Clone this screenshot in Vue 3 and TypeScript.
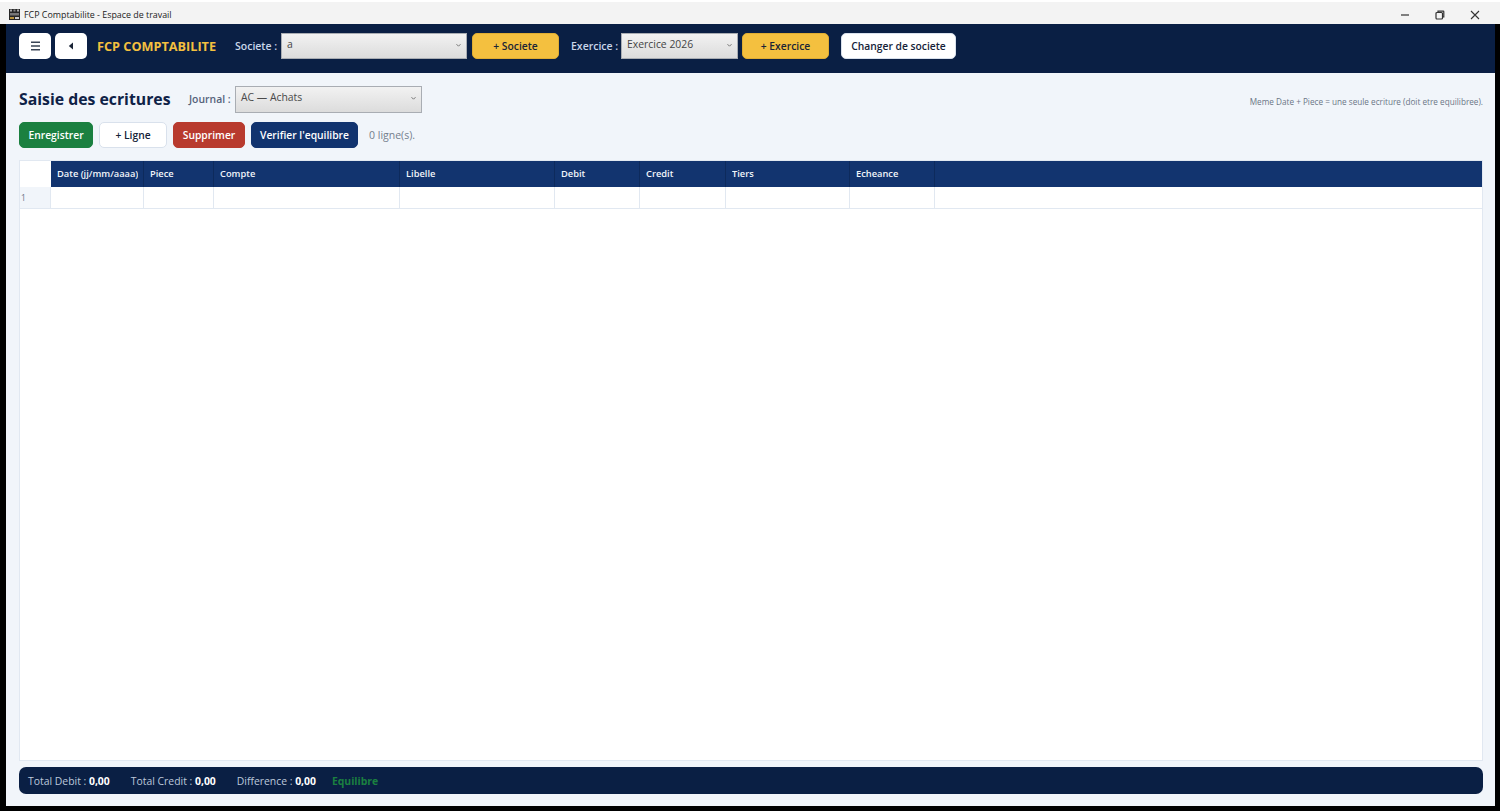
<script setup lang="ts">
const columns: { label: string; width: number }[] = [
  { label: 'Date (jj/mm/aaaa)', width: 93 },
  { label: 'Piece', width: 70 },
  { label: 'Compte', width: 186 },
  { label: 'Libelle', width: 155 },
  { label: 'Debit', width: 85 },
  { label: 'Credit', width: 86 },
  { label: 'Tiers', width: 124 },
  { label: 'Echeance', width: 85 },
]
</script>

<template>
  <div class="window">
    <header class="titlebar">
      <div class="title">
        <svg class="app-icon" width="11" height="11" viewBox="0 0 11 11">
          <rect width="11" height="11" fill="#262626" />
          <rect x="1" y="0.5" width="2" height="2" fill="#aaa" />
          <rect x="4.5" y="0.5" width="2" height="2" fill="#888" />
          <rect x="8" y="0.5" width="2" height="2" fill="#aaa" />
          <rect x="1" y="4" width="9" height="2.5" fill="#777" />
          <rect x="1" y="8" width="4" height="2" fill="#b8923a" />
          <rect x="6" y="8" width="4" height="2" fill="#ccc" />
        </svg>
        <span>FCP Comptabilite - Espace de travail</span>
      </div>
      <div class="win-controls">
        <svg width="10" height="10" viewBox="0 0 10 10"><path d="M1 5h8" stroke="#333" stroke-width="1.2" /></svg>
        <svg width="10" height="10" viewBox="0 0 10 10" fill="none" stroke="#333" stroke-width="1.2"><rect x="1" y="2.5" width="6.5" height="6.5" rx="1" /><path d="M3 2.2V1.2h5.3a.5.5 0 0 1 .5.5V7h-1" /></svg>
        <svg width="10" height="10" viewBox="0 0 10 10"><path d="M1 1l8 8M9 1l-8 8" stroke="#333" stroke-width="1.1" /></svg>
      </div>
    </header>

    <div class="app">
      <nav class="topbar">
        <button class="btn icon-btn">
          <svg width="11" height="10" viewBox="0 0 11 10"><path d="M1 1.2h9M1 5h9M1 8.8h9" stroke="#3a4556" stroke-width="1.4" /></svg>
        </button>
        <button class="btn icon-btn">
          <svg width="6" height="8" viewBox="0 0 6 8"><path d="M5 0.5v7L0.8 4z" fill="#1a2436" /></svg>
        </button>
        <span class="brand">FCP COMPTABILITE</span>
        <span class="bar-label societe-label">Societe :</span>
        <div class="select societe-select">
          <span>a</span>
          <svg class="chev" width="7" height="5" viewBox="0 0 7 5"><path d="M1.5 1.2l2 2 2-2" fill="none" stroke="#777" /></svg>
        </div>
        <button class="btn gold societe-add">+ Societe</button>
        <span class="bar-label exercice-label">Exercice :</span>
        <div class="select exercice-select">
          <span>Exercice 2026</span>
          <svg class="chev" width="7" height="5" viewBox="0 0 7 5"><path d="M1.5 1.2l2 2 2-2" fill="none" stroke="#777" /></svg>
        </div>
        <button class="btn gold exercice-add">+ Exercice</button>
        <button class="btn white change">Changer de societe</button>
      </nav>

      <main class="content">
        <div class="heading">
          <h1>Saisie des ecritures</h1>
          <span class="journal-label">Journal :</span>
          <div class="select journal-select">
            <span>AC — Achats</span>
            <svg class="chev" width="7" height="5" viewBox="0 0 7 5"><path d="M1.5 1.2l2 2 2-2" fill="none" stroke="#777" /></svg>
          </div>
          <span class="hint">Meme Date + Piece = une seule ecriture (doit etre equilibree).</span>
        </div>

        <div class="actions">
          <button class="btn green">Enregistrer</button>
          <button class="btn white ligne">+ Ligne</button>
          <button class="btn red">Supprimer</button>
          <button class="btn blue">Verifier l'equilibre</button>
          <span class="count">0 ligne(s).</span>
        </div>

        <section class="grid">
          <div class="row head">
            <div class="corner"></div>
            <div v-for="c in columns" :key="c.label" class="hcell" :style="{ width: c.width + 'px' }"><span>{{ c.label }}</span></div>
            <div class="hcell fill"></div>
          </div>
          <div class="row body">
            <div class="rownum">1</div>
            <div v-for="c in columns" :key="c.label" class="cell" :style="{ width: c.width + 'px' }"></div>
            <div class="cell fill"></div>
          </div>
        </section>

        <footer class="totals">
          <span>Total Debit : <b>0,00</b></span>
          <span>Total Credit : <b>0,00</b></span>
          <span>Difference : <b>0,00</b></span>
          <span class="ok">Equilibre</span>
        </footer>
      </main>
    </div>
  </div>
</template>

<style>
html, body { margin: 0; background: #000; }
</style>

<style scoped>
.window {
  width: 1500px;
  height: 811px;
  box-sizing: border-box;
  display: flex;
  flex-direction: column;
  background: #000;
  padding-bottom: 5px;
  overflow: hidden;
  font-family: "Open Sans", "Noto Sans", sans-serif;
}
.titlebar {
  height: 24px;
  flex: none;
  box-sizing: border-box;
  border-top: 2px solid #fff;
  background: #f3f3f3;
  display: flex;
  align-items: center;
  justify-content: space-between;
  padding: 3px 20px 0 9px;
  color: #222;
  font-size: 8.9px;
}
.title { display: flex; align-items: center; gap: 4px; }
.app-icon { display: block; }
.win-controls { display: flex; gap: 25px; align-items: center; }
.win-controls svg { display: block; }
.app {
  flex: 1;
  margin: 0 5px 0 6px;
  display: flex;
  flex-direction: column;
  background: #f1f5fa;
  min-height: 0;
}
.topbar {
  height: 49px;
  flex: none;
  box-sizing: border-box;
  background: #0a1f44;
  display: flex;
  align-items: center;
  padding: 0 0 6px 13px;
}
.btn {
  height: 26px;
  box-sizing: border-box;
  border: 1px solid transparent;
  border-radius: 5px;
  font-family: inherit;
  font-size: 10.3px;
  font-weight: 600;
  padding: 0;
  display: flex;
  align-items: center;
  justify-content: center;
  flex: none;
}
.icon-btn { width: 32px; background: #fff; margin-right: 4px; }
.brand { margin-left: 6px; width: 135px; color: #f4c03f; font-size: 12.7px; font-weight: 700; white-space: nowrap; }
.bar-label { color: #c9d6ea; font-size: 10.5px; font-weight: 600; white-space: nowrap; }
.societe-label { width: 46px; margin-left: 3px; }
.exercice-label { width: 50px; margin-left: 12px; }
.select {
  height: 26px;
  box-sizing: border-box;
  border: 1px solid #a9adb3;
  background: linear-gradient(#f2f2f2, #dcdcdc);
  color: #444;
  font-size: 10.4px;
  padding: 3px 5px 0;
  position: relative;
  flex: none;
  line-height: 14px;
}
.chev { position: absolute; right: 4px; top: 9px; }
.societe-select { width: 186px; margin-right: 5px; }
.exercice-select { width: 117px; margin-right: 4px; }
.gold { background: #f4c03f; border-color: #e0ad32; color: #1a2436; }
.societe-add { width: 87px; }
.exercice-add { width: 87px; }
.white { background: #fff; border-color: #d9e1ec; color: #152238; }
.change { width: 115px; margin-left: 12px; }
.content {
  flex: 1;
  min-height: 0;
  display: flex;
  flex-direction: column;
  padding: 12px 12px 12px 13px;
}
.heading { height: 28px; display: flex; align-items: center; flex: none; }
h1 { margin: 0; width: 170px; color: #0f2247; font-size: 15.8px; font-weight: 700; white-space: nowrap; }
.journal-label { width: 46px; color: #55627a; font-size: 10.4px; font-weight: 600; white-space: nowrap; }
.journal-select { width: 187px; height: 27px; color: #4a4a4a; }
.hint { margin-left: auto; color: #6b7686; font-size: 8.2px; padding-top: 4px; }
.actions { display: flex; align-items: center; margin-top: 9px; flex: none; }
.actions .btn { height: 26px; padding-bottom: 1px; }
.green { background: #1b8040; border-color: #1b8040; color: #fff; width: 74px; }
.ligne { width: 68px; margin-left: 6px; }
.red { background: #b83a2e; border-color: #b83a2e; color: #fff; width: 72px; margin-left: 6px; }
.blue { background: #12346f; border-color: #12346f; color: #fff; width: 107px; margin-left: 6px; }
.count { margin-left: 11px; color: #757f8d; font-size: 10.5px; }
.grid {
  flex: 1;
  min-height: 0;
  margin-top: 12px;
  box-sizing: border-box;
  background: #fff;
  border: 1px solid #e1e8f1;
  display: flex;
  flex-direction: column;
}
.row { display: flex; flex: none; }
.head { height: 26px; }
.body { height: 22px; border-bottom: 1px solid #e1e8f1; box-sizing: border-box; }
.corner { width: 31px; background: #fff; flex: none; }
.hcell {
  flex: none;
  box-sizing: border-box;
  background: #12346f;
  color: #f1f5fa;
  font-size: 9.3px;
  font-weight: 600;
  padding: 6px 5px 0 6px;
  border-right: 1px solid #0d2a5c;
  white-space: nowrap;
}
.hcell span { display: block; overflow: hidden; }
.rownum {
  width: 31px;
  flex: none;
  box-sizing: border-box;
  background: #f1f5fa;
  color: #6b7686;
  font-size: 8.5px;
  padding: 5px 0 0 1px;
  border-right: 1px solid #e1e8f1;
}
.cell { flex: none; box-sizing: border-box; border-right: 1px solid #e1e8f1; }
.fill { flex: 1; border-right: 0; }
.totals {
  height: 27px;
  flex: none;
  margin-top: 6px;
  box-sizing: border-box;
  background: #0a1f44;
  border-radius: 7px;
  display: flex;
  align-items: center;
  padding-left: 9px;
  gap: 21px;
  color: #bcc8da;
  font-size: 10.4px;
}
.totals b { color: #fff; font-weight: 700; }
.totals .ok { color: #1b8040; font-weight: 700; margin-left: -5px; }
</style>
